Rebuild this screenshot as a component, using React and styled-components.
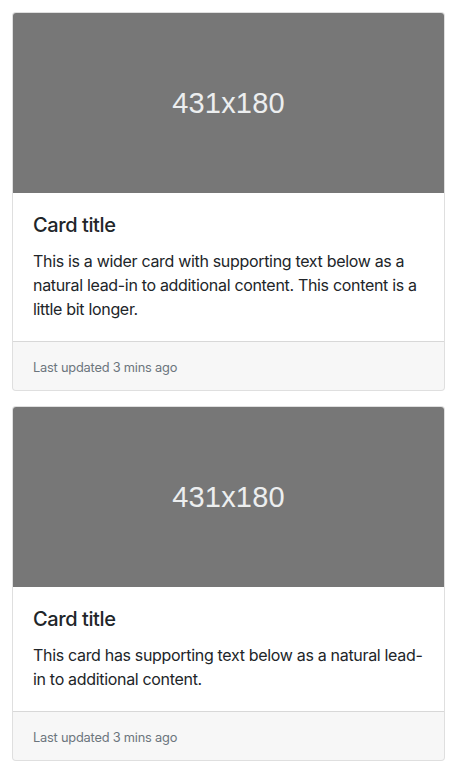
import React from "react";
import styled, { createGlobalStyle } from "styled-components";

const GlobalStyle = createGlobalStyle`
  body {
    margin: 0;
    background: #fff;
    font-family: Inter, "Noto Sans", "Liberation Sans", sans-serif;
    font-size: 16px;
    line-height: 1.5;
    letter-spacing: -0.32px;
    color: #212529;
  }
`;

const Page = styled.div`
  padding: 12px;
  display: flex;
  flex-direction: column;
  gap: 15px;
`;

const Card = styled.div`
  width: 433px;
  box-sizing: border-box;
  display: flex;
  flex-direction: column;
  background: #fff;
  border: 1px solid rgba(0, 0, 0, 0.125);
  border-radius: 4px;
  overflow: hidden;
`;

const Placeholder = styled.div`
  height: 180px;
  background: #777777;
  color: #eceeef;
  display: flex;
  align-items: center;
  justify-content: center;
  font-family: "Liberation Sans", Arial, sans-serif;
  font-size: 29px;
  letter-spacing: 0.2px;
  padding-top: 2px;
  box-sizing: border-box;
`;

const Body = styled.div`
  padding: 20px;
`;

const Title = styled.h5`
  margin: 0 0 12px;
  font-size: 20px;
  font-weight: 500;
  line-height: 1.2;
  letter-spacing: -0.4px;
`;

const Text = styled.p`
  margin: 0;
`;

const Footer = styled.div`
  padding: 12px 20px;
  background: rgba(0, 0, 0, 0.03);
  border-top: 1px solid rgba(0, 0, 0, 0.125);
`;

const Muted = styled.small`
  font-size: 12.8px;
  letter-spacing: -0.2px;
  color: #6c757d;
`;

const cards = [
  "This is a wider card with supporting text below as a natural lead-in to additional content. This content is a little bit longer.",
  "This card has supporting text below as a natural lead-in to additional content.",
];

export default function App() {
  return (
    <>
      <GlobalStyle />
      <Page>
        {cards.map((text, i) => (
          <Card key={i}>
            <Placeholder>431x180</Placeholder>
            <Body>
              <Title>Card title</Title>
              <Text>{text}</Text>
            </Body>
            <Footer>
              <Muted>Last updated 3 mins ago</Muted>
            </Footer>
          </Card>
        ))}
      </Page>
    </>
  );
}
